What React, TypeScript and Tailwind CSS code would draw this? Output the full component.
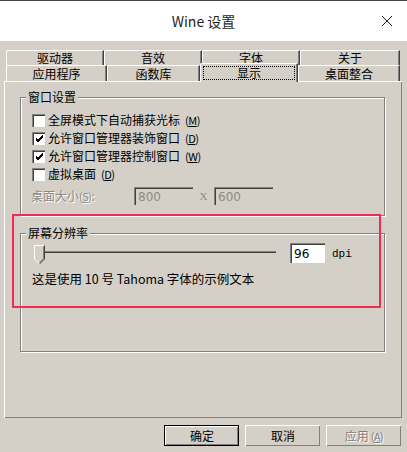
import React from "react";

const ui = { fontFamily: '"Noto Sans CJK SC", "Noto Sans", sans-serif' };

function Key({ k }: { k: string }) {
  // little mnemonic like (M)
  return (
    <span className="ml-[5px] text-[11px] tracking-[-0.5px]">
      (<span className="underline">{k}</span>)
    </span>
  );
}

function Tab({ label, w }: { label: string; w: string }) {
  return (
    <div
      className={`${w} h-full flex items-center justify-center border-t border-l border-r border-t-white border-l-white border-r-[#404040] shadow-[inset_-1px_0_#808080] rounded-tl-[2px] text-[12px] leading-none`}
    >
      {label}
    </div>
  );
}

function Check({ on, text, k }: { on?: boolean; text: string; k: string }) {
  return (
    <div className="h-[18px] flex items-center pl-[11px]">
      <span className="w-[13px] h-[13px] bg-white border-t border-l border-[#808080] border-r-white border-b-white shadow-[inset_1px_1px_0_#404040] flex items-center justify-center">
        {on && (
          <svg width="9" height="9" viewBox="0 0 9 9">
            <path d="M1 4 L3 6 L8 1 M1 5 L3 7 L8 2 M1 6 L3 8 L8 3" stroke="#000" strokeWidth="1" fill="none" />
          </svg>
        )}
      </span>
      <span className="ml-[3px] text-[12px] leading-none">{text}</span>
      <Key k={k} />
    </div>
  );
}

function Sunken({ w, h, value, disabled }: { w: string; h: string; value: string; disabled?: boolean }) {
  return (
    <div
      className={`${w} ${h} border-t border-l border-[#808080] border-r-white border-b-white shadow-[inset_1px_1px_0_#404040] flex items-center pl-[3px] text-[12px] ${disabled ? "bg-[#d4d0c8] text-[#8a8a8a]" : "bg-white text-black"}`}
      style={{ fontFamily: '"DejaVu Sans", sans-serif' }}
    >
      {value}
    </div>
  );
}

function Group({ title, h, className, children }: { title: string; h: string; className?: string; children: React.ReactNode }) {
  return (
    <div className={`relative ml-[15px] w-[365px] ${h} border border-[#808080] shadow-[1px_1px_0_#fff,inset_1px_1px_0_#fff] ${className ?? ""}`}>
      <span className="absolute left-[5px] -top-[8px] px-[2px] bg-[#d4d0c8] text-[12px] leading-[14px]">{title}</span>
      {children}
    </div>
  );
}

function Btn({ label, def, disabled }: { label: React.ReactNode; def?: boolean; disabled?: boolean }) {
  return (
    <div className={`w-[75px] h-[21px] ${def ? "border border-black" : ""}`}>
      <div className="w-full h-full border-t border-l border-white border-r-[#404040] border-b-[#404040] shadow-[inset_-1px_-1px_0_#808080] flex items-center justify-center text-[12px]">
        {disabled ? <span className="text-[#808080] [text-shadow:1px_1px_0_#fff]">{label}</span> : label}
      </div>
    </div>
  );
}

export default function App() {
  return (
    <div className="relative w-[407px] h-[452px] flex flex-col bg-white border-t border-[#444] text-[#000]" style={ui}>
      {/* title bar */}
      <div className="h-[40px] grid grid-cols-[1fr_auto_1fr] items-center">
        <div />
        <div className="text-[14px] text-[#1f1f1f]">Wine 设置</div>
        <div className="flex justify-end pr-[14px]">
          <svg width="12" height="12" viewBox="0 0 12 12">
            <path d="M1 1 L11 11 M11 1 L1 11" stroke="#222" strokeWidth="1" />
          </svg>
        </div>
      </div>

      {/* body */}
      <div className="flex-1 bg-[#d4d0c8] pt-[9px] pl-[4px] pr-[5px]">
        <div className="ml-[2px] mr-[1px]">
          <div className="h-[15px] flex">
            <Tab label="驱动器" w="w-[98px]" />
            <Tab label="音效" w="w-[98px]" />
            <Tab label="字体" w="w-[98px]" />
            <Tab label="关于" w="w-[100px]" />
          </div>
          <div className="h-[16px] flex items-start">
            <Tab label="应用程序" w="w-[101px]" />
            <Tab label="函数库" w="w-[93px]" />
            <div className="relative z-10 w-[98px] h-[19px] -mt-[2px] bg-[#d4d0c8] border-t border-l border-r border-t-white border-l-white border-r-[#404040] shadow-[inset_-1px_0_#808080] rounded-tl-[2px] pt-[2px] pl-[2px] pr-[2px]">
              <div className="h-[14px] border border-dotted border-black flex items-center justify-center text-[12px] leading-none">显示</div>
            </div>
            <Tab label="桌面整合" w="w-[102px]" />
          </div>
        </div>

        {/* panel */}
        <div className="h-[337px] border-t border-l border-white border-r-[#404040] border-b-[#404040] shadow-[inset_-1px_-1px_0_#808080] pt-[15px]">
          <Group title="窗口设置" h="h-[119px]">
            <div className="pt-[13px]">
              <Check text="全屏模式下自动捕获光标" k="M" />
              <Check on text="允许窗口管理器装饰窗口" k="D" />
              <Check on text="允许窗口管理器控制窗口" k="W" />
              <Check text="虚拟桌面" k="D" />
              <div className="mt-[4px] h-[18px] flex items-center pl-[10px] text-[#8a8a8a]">
                <span className="w-[103px] text-[12px] leading-none [text-shadow:1px_1px_0_#fff]">
                  桌面大小<span className="text-[11px] tracking-[-0.5px]">(<span className="underline">S</span>)</span>:
                </span>
                <Sunken w="w-[59px]" h="h-[18px]" value="800" disabled />
                <span className="w-[21px] text-center text-[11px]" style={{ fontFamily: '"Liberation Serif", serif' }}>X</span>
                <Sunken w="w-[59px]" h="h-[18px]" value="600" disabled />
              </div>
            </div>
          </Group>

          <Group title="屏幕分辨率" h="h-[119px]" className="mt-[17px]">
            <div className="pt-[9px] pl-[13px] flex items-start">
              <div className="relative w-[242px] h-[21px]">
                <div className="mt-[8px] ml-[4px] h-[4px] border-t border-l border-[#808080] border-r-white border-b-white shadow-[inset_1px_1px_0_#404040]" />
                <svg className="absolute left-0 top-[2px]" width="11" height="20" viewBox="0 0 11 20">
                  <path d="M0.5 0.5 H10.5 V14 L5.5 19 L0.5 14 Z" fill="#d4d0c8" />
                  <path d="M0.5 14 V0.5 H10" stroke="#fff" fill="none" />
                  <path d="M10.5 0.5 V14 L5.5 19" stroke="#404040" fill="none" />
                  <path d="M9.5 1.5 V13.5 L5.5 17.5" stroke="#808080" fill="none" />
                  <path d="M0.5 14 L5 18.5" stroke="#fff" fill="none" />
                </svg>
              </div>
              <div className="ml-[14px]">
                <Sunken w="w-[35px]" h="h-[20px]" value="96" />
              </div>
              <span className="ml-[7px] mt-[3px] text-[11px]" style={{ fontFamily: '"Liberation Mono", monospace' }}>dpi</span>
            </div>
            <div className="mt-[6px] pl-[11px] text-[12.5px] leading-[18px]">这是使用 10 号 Tahoma 字体的示例文本</div>
          </Group>
        </div>

        {/* buttons */}
        <div className="mt-[7px] flex justify-end gap-[6px] pr-[1px]">
          <Btn label="确定" def />
          <Btn label="取消" />
          <Btn
            disabled
            label={
              <>
                应用<span className="text-[11px] tracking-[-0.5px] ml-[2px]">(<span className="underline">A</span>)</span>
              </>
            }
          />
        </div>
      </div>

      {/* annotation box */}
      <div className="absolute left-[12px] top-[213px] w-[369px] h-[94px] border-2 border-[#f52a52] pointer-events-none" />
    </div>
  );
}
